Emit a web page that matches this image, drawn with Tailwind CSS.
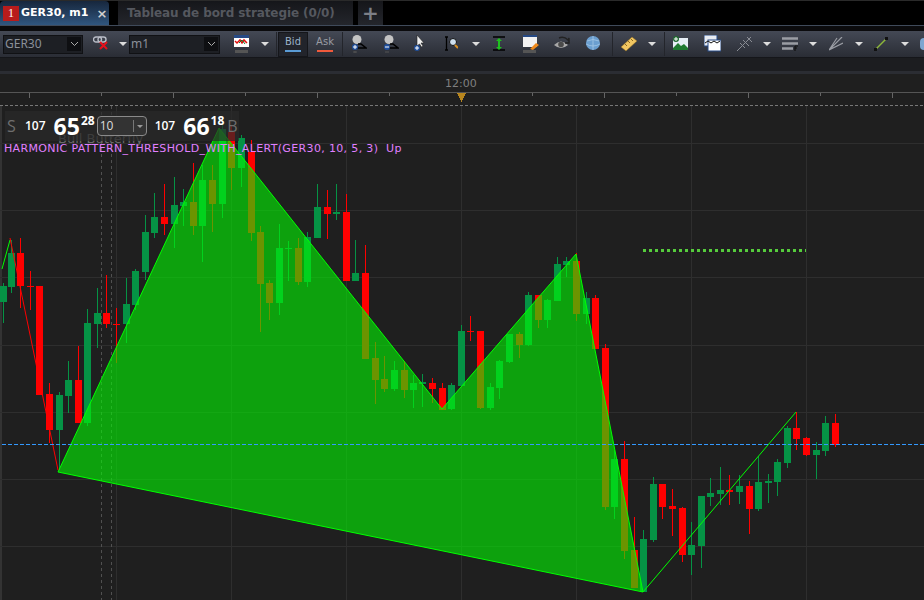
<!DOCTYPE html>
<html lang="en">
<head>
    <meta charset="UTF-8">
    <title>GER30, m1</title>
    <script src="https://cdn.jsdelivr.net/npm/@tailwindcss/browser@4"></script>
</head>
<body class="bg-black overflow-hidden">
<div class="w-[924px] h-[600px] flex flex-col font-['DejaVu_Sans',sans-serif]">

    <!-- tabs -->
    <div class="h-[26px] flex items-end bg-black border-t border-[#2a2a2a] border-b border-b-[#3f4a5a]">
        <div class="w-[109px] h-[24px] flex items-center bg-gradient-to-b from-[#17273d] to-[#30567f] rounded-t-sm whitespace-nowrap">
            <span class="w-[16px] h-[15px] ml-[3px] shrink-0 flex items-center justify-center bg-[#b81c1c] text-white text-[12px] font-['Liberation_Serif',serif]">1</span>
            <span class="ml-[2px] text-white text-[11px] font-bold">GER30, m1</span>
            <span class="ml-[8px] text-[#d0d0d0] text-[13px] font-bold leading-none">×</span>
        </div>
        <div class="w-[235px] h-[24px] ml-[9px] pl-[9px] flex items-center bg-gradient-to-b from-[#15161a] to-[#24262c] text-[#55585f] text-[12px] font-bold tracking-[-0.1px] whitespace-nowrap">Tableau de bord strategie (0/0)</div>
        <div class="w-[25px] h-[24px] ml-[5px] flex items-center justify-center bg-gradient-to-b from-[#15161a] to-[#24262c] text-[#7d8087] text-[20px] font-bold leading-none">+</div>
    </div>

    <div class="h-[5px] bg-[#0b0b0d]"></div>

    <!-- toolbar -->
    <div class="h-[27px] flex items-center pl-[3px] overflow-hidden bg-gradient-to-b from-[#444955] to-[#2a2d35] border-b border-[#15161a]">
        <div class="w-[80px] h-[19px] flex items-center justify-between bg-[#1d1f24] border border-[#101114] text-[#8b909a] text-[12px] pl-[1px] font-['Noto_Sans',sans-serif]">GER30<span class="w-[14px] h-[14px] mr-[1px] bg-[#0e0f12] flex items-center justify-center"><svg width="7" height="4"><path d="M0 0l3.500 3.500L7 0" fill="none" stroke="#aaa"/></svg></span></div>
        <div class="w-[22px] ml-[7px] flex justify-center">
            <svg width="16" height="16" viewBox="0 0 16 16"><rect x="0.500" y="1" width="8" height="5" rx="2.500" fill="none" stroke="#b8bcc6" stroke-width="1.400"/><rect x="5" y="1" width="8" height="5" rx="2.500" fill="none" stroke="#b8bcc6" stroke-width="1.400"/><path d="M7 6l7 7M14 6l-7 7" stroke="#e8101c" stroke-width="2"/></svg>
        </div>
        <svg class="ml-[7px]" width="8" height="4"><path d="M0 0h8L4 4z" fill="#ddd"/></svg>
        <div class="w-[91px] h-[19px] ml-[2px] flex items-center justify-between bg-[#1d1f24] border border-[#101114] text-[#8b909a] text-[12px] pl-[1px] font-['Noto_Sans',sans-serif]">m1<span class="w-[14px] h-[14px] mr-[1px] bg-[#0e0f12] flex items-center justify-center"><svg width="7" height="4"><path d="M0 0l3.500 3.500L7 0" fill="none" stroke="#aaa"/></svg></span></div>
        <div class="w-[16px] ml-[14px] flex justify-center">
            <svg width="16" height="18" viewBox="0 0 16 18"><rect width="15" height="12" fill="#fff"/><rect width="15" height="3" fill="#264a86"/><path d="M1 6l2 2 3-3 2 3 2-3 3 3" fill="none" stroke="#e01010" stroke-width="1.500"/><path d="M5 8l3-3 3 4" fill="none" stroke="#108030"/><rect x="1" y="15" width="13" height="3" fill="#555"/></svg>
        </div>
        <svg class="ml-[11px]" width="8" height="4"><path d="M0 0h8L4 4z" fill="#ddd"/></svg>
        <div class="w-[1px] h-[24px] ml-[7px] bg-[#23252b]"></div>
        <div class="w-[30px] h-[25px] ml-[1px] flex flex-col items-center justify-center bg-[#22242b] border border-[#15161a] text-[#9bb2c8] text-[10px] leading-none">Bid<span class="w-[16px] h-[2px] mt-[3px] bg-[#5a9bd5]"></span></div>
        <div class="w-[34px] h-[25px] flex flex-col items-center justify-center text-[#9a9ca3] text-[10px] leading-none">Ask<span class="w-[16px] h-[2px] mt-[3px] bg-[#f05a3c]"></span></div>
        <div class="w-[1px] h-[24px] bg-[#23252b]"></div>

        <!-- zoom / selection icons -->
        <svg class="ml-[8px]" width="16" height="18" viewBox="0 0 16 18"><circle cx="6" cy="4.500" r="4.500" fill="#c4c4c4"/><path d="M7 9h3l5 4H6" fill="none" stroke="#000" stroke-width="1.500"/><circle cx="4" cy="12" r="3" fill="#1f4f9c"/><path d="M2 12h4M4 10v4" stroke="#fff"/><path d="M2 17h4M4 16v2" stroke="#555"/></svg>
        <svg class="ml-[16px]" width="16" height="18" viewBox="0 0 16 18"><circle cx="6" cy="4.500" r="4.500" fill="#c4c4c4"/><path d="M7 9h3l5 4H6" fill="none" stroke="#000" stroke-width="1.500"/><circle cx="4" cy="12" r="3" fill="#1f4f9c"/><path d="M2 12h4" stroke="#fff"/><path d="M2 17h4" stroke="#555"/></svg>
        <svg class="ml-[15px]" width="12" height="18" viewBox="0 0 12 18"><path d="M3 0v11l2.500-2 2 3 1.500-1-2-3h3z" fill="#eee" stroke="#222" stroke-width=".6"/><circle cx="3" cy="13" r="3" fill="#1f4f9c"/><path d="M1 13h4M3 11v4" stroke="#fff"/></svg>
        <svg class="ml-[18px]" width="14" height="18" viewBox="0 0 14 18"><path d="M1 2h3M1 15h3M2.500 2v13" stroke="#000" stroke-width="1.300"/><circle cx="9" cy="7" r="3.500" fill="#cfe0ee" stroke="#111"/><path d="M11 10l3 3" stroke="#d89020" stroke-width="2"/></svg>
        <svg class="ml-[14px]" width="8" height="4"><path d="M0 0h8L4 4z" fill="#ddd"/></svg>
        <svg class="ml-[13px]" width="12" height="16" viewBox="0 0 12 16"><path d="M0 1h12M0 14h12" stroke="#000" stroke-width="1.500"/><path d="M6 2l3 3H7v6h2l-3 3-3-3h2V5H3z" fill="#1fc01f"/></svg>
        <svg class="ml-[18px]" width="16" height="18" viewBox="0 0 16 18"><rect width="14" height="12" fill="#f2f2f2"/><rect width="14" height="2" fill="#264a86"/><path d="M7 14l6-6 3 2-6 5z" fill="#f08a1c"/><rect y="15" width="13" height="3" fill="#555"/></svg>
        <svg class="ml-[15px]" width="16" height="16" viewBox="0 0 16 16"><path d="M0 9q7-7 14 0-7 6-14 0z" fill="#a8a8a8"/><circle cx="7" cy="8.500" r="2.800" fill="#4a4a4a"/><path d="M5 2q5-2 9 2l1-2v5h-4" fill="none" stroke="#222" stroke-width="1.400"/></svg>
        <svg class="ml-[15px]" width="16" height="17" viewBox="0 0 16 17"><circle cx="8" cy="7" r="7" fill="#6b9fd0"/><path d="M2 5q6-3 12 0M1 8q7 4 14 0M8 0v14" fill="none" stroke="#a5c8e6" stroke-width=".8"/></svg>
        <div class="w-[1px] h-[24px] ml-[11px] bg-[#23252b]"></div>
        <svg class="ml-[8px]" width="16" height="16" viewBox="0 0 16 16"><path d="M0 11L11 1l5 4L5 15z" fill="#f2c762" stroke="#8c6a20" stroke-width=".5"/><path d="M4 8l2 2M7 5l2 2M10 3l2 2" stroke="#8c6a20"/></svg>
        <svg class="ml-[11px]" width="8" height="4"><path d="M0 0h8L4 4z" fill="#ddd"/></svg>
        <div class="w-[1px] h-[24px] ml-[8px] bg-[#23252b]"></div>
        <svg class="ml-[8px]" width="16" height="16" viewBox="0 0 16 16"><rect y="2" width="15" height="12" fill="#e6eef5"/><path d="M0 12l5-5 3 3 3-2 4 4v2H0z" fill="#1f7a30"/><circle cx="3" cy="3" r="3" fill="#1f6a30"/><path d="M1 3h4M3 1v4" stroke="#fff"/></svg>
        <svg class="ml-[15px]" width="17" height="18" viewBox="0 0 17 18"><rect width="13" height="11" fill="#e8ecf2" stroke="#264a86"/><rect x="4" y="5" width="13" height="11" fill="#fff" stroke="#264a86"/><path d="M1 8l3-2 3 2 3-2 3 2 3-2" fill="none" stroke="#111"/></svg>
        <svg class="ml-[16px]" width="15" height="16" viewBox="0 0 15 16"><path d="M0 15L14 1M3 7l5 5M6 4l6 6M10 1l5 5" stroke="#8a8d94" fill="none"/></svg>
        <svg class="ml-[11px]" width="8" height="4"><path d="M0 0h8L4 4z" fill="#ddd"/></svg>
        <svg class="ml-[11px]" width="16" height="14" viewBox="0 0 16 14"><path d="M0 1.500h16M0 6.500h16M0 11.500h11" stroke="#9a9da4" stroke-width="2.500"/><path d="M13 9h3M13 9v5M13 11h2" stroke="#111" stroke-width="1.200" fill="none"/></svg>
        <svg class="ml-[11px]" width="8" height="4"><path d="M0 0h8L4 4z" fill="#ddd"/></svg>
        <svg class="ml-[12px]" width="14" height="14" viewBox="0 0 14 14"><path d="M0 13L13 0M0 13L8 1M0 13L14 6" stroke="#9a9da4" stroke-width="1.200" fill="none"/></svg>
        <svg class="ml-[12px]" width="8" height="4"><path d="M0 0h8L4 4z" fill="#ddd"/></svg>
        <svg class="ml-[11px]" width="14" height="14" viewBox="0 0 14 14"><path d="M1 13L13 1" stroke="#8db83a" stroke-width="1.500"/><rect y="11" width="3" height="3" fill="#111"/><rect x="11" width="3" height="3" fill="#111"/></svg>
        <svg class="ml-[13px]" width="8" height="4"><path d="M0 0h8L4 4z" fill="#ddd"/></svg>
        <div class="w-[4px] h-[12px] ml-[11px] bg-[#7da6d0] rounded-l-sm"></div>
    </div>

    <div class="h-[13px] bg-[#1c1d20]"></div>
    <div class="h-[3px] bg-[#2b2d33]"></div>

    <!-- time axis -->
    <div class="relative h-[32px] bg-[#1f1f1f]">
        <span class="absolute left-[445px] top-[2px] text-[#7f7f7f] text-[11px]">12:00</span>
        <svg class="absolute left-0 top-0" width="924" height="32" viewBox="0 74 924 32" shape-rendering="crispEdges">
            <path d="M0 92.500h924" stroke="#555"/>
            <path d="M29.500 93v5M173.500 93v5M317.500 93v5M604.500 93v5M748.500 93v5M892.500 93v5" stroke="#666"/>
            <path d="M101.500 93v3M245.500 93v3M389.500 93v3M532.500 93v3M676.500 93v3M820.500 93v3" stroke="#666"/>
            <path d="M457 93h9l-4.500 9z" fill="#b8861e"/>
            <path d="M0 105.500h924" stroke="#777" stroke-dasharray="3 2"/>
        </svg>
    </div>

    <!-- chart -->
    <div class="relative flex-1 bg-[#1f1f1f] border-l-2 border-[#333]">
        <svg id="chart" class="absolute left-[-2px] top-0" width="924" height="494" viewBox="0 106 924 494"></svg>

        <span class="absolute left-[56px] top-[23px] text-[#6a6a6a] text-[13px] whitespace-nowrap">Bull Butterfly</span>
        <div class="absolute left-[3px] top-[5px] w-[234px] h-[30px] flex items-center bg-[#2a2a2a]/70 font-['Open_Sans',sans-serif] text-white">
            <span class="ml-[2px] w-[18px] text-[#6e6e6e] text-[16px]">S</span>
            <span class="text-[12px] font-semibold">107</span>
            <span class="ml-[8px] text-[23px] font-bold leading-none">65</span>
            <span class="ml-[1px] mb-[11px] text-[12px] font-bold leading-none">28</span>
            <span class="w-[50px] h-[20px] ml-[2px] flex items-center justify-between border border-[#8a8a8a] rounded-sm bg-[#333] text-[#ddd] text-[12px] pl-[2px]">10<span class="w-[13px] flex justify-center border-l border-[#777]"><svg width="6" height="12"><path d="M0 5h6L3 8z" fill="#999"/></svg></span></span>
            <span class="ml-[8px] text-[12px] font-semibold">107</span>
            <span class="ml-[8px] text-[23px] font-bold leading-none">66</span>
            <span class="ml-[1px] mb-[11px] text-[12px] font-bold leading-none">18</span>
            <span class="ml-[3px] text-[#6e6e6e] text-[16px]">B</span>
        </div>
        <span class="absolute left-[2px] top-[36px] text-[#e080ff] text-[11px] tracking-[0.35px] leading-[13px] whitespace-pre">HARMONIC PATTERN_THRESHOLD_WITH_ALERT(GER30, 10, 5, 3)  Up</span>
    </div>
</div>

<script>
    // x, wick top, wick bottom, body top, body bottom, 1 = up (green) / 0 = down (red)
    const candles = [
        [3,283,323,286,302,1],[11,240,293,253,287,1],[20,238,308,253,286,0],[30,271,310,286,287,0],
        [39,286,395,286,395,0],[49,383,443,394,430,0],[59,392,470,395,430,1],[68,361,413,380,396,1],
        [78,346,423,380,423,0],[87,309,426,323,423,1],[97,288,348,313,324,1],[106,275,328,313,324,0],
        [116,308,363,324,325,0],[126,278,343,304,324,1],[135,269,310,271,305,1],[145,215,280,232,272,1],
        [154,193,238,217,233,1],[164,184,235,217,224,0],[174,177,248,205,224,1],[183,189,226,202,206,1],
        [193,163,235,202,226,0],[202,165,262,180,226,1],[212,165,232,180,204,0],[222,125,218,129,204,1],
        [231,125,190,132,168,0],[241,135,187,138,168,1],[251,140,241,152,233,0],[260,226,332,232,284,0],
        [269,280,320,283,303,0],[279,224,315,248,303,1],[288,241,281,248,249,1],[298,238,285,248,282,0],
        [307,232,287,237,282,1],[317,184,238,207,238,1],[327,190,239,207,214,0],[336,184,220,212,214,1],
        [346,194,281,212,281,0],[355,240,281,273,281,1],[365,245,359,273,359,0],[375,342,404,358,380,0],
        [384,356,392,379,389,0],[394,361,391,370,389,1],[404,361,398,370,390,0],[413,375,408,383,390,1],
        [422,374,407,382,384,1],[432,378,403,383,389,0],[442,383,410,388,410,0],[451,383,410,385,409,1],
        [461,325,386,331,386,1],[470,316,341,331,332,0],[480,331,409,331,408,0],[490,383,410,387,408,1],
        [499,360,399,361,388,1],[509,334,363,334,362,1],[519,332,358,334,345,0],[528,292,346,295,345,1],
        [538,295,328,295,320,0],[547,299,328,300,320,1],[557,257,301,264,301,1],[566,257,277,261,265,1],
        [576,253,321,261,314,0],[586,292,324,298,314,1],[595,295,349,298,349,0],[605,344,510,348,507,0],
        [614,450,519,459,507,1],[624,441,559,459,551,0],[634,517,588,550,588,0],[643,530,592,539,592,1],
        [653,477,542,484,540,1],[662,484,519,484,507,0],[672,489,536,506,509,0],[682,507,562,508,555,0],
        [691,522,575,545,555,1],[701,496,568,496,546,1],[710,478,506,493,497,1],[720,467,505,490,494,1],
        [729,475,505,490,492,0],[739,475,504,486,492,1],[749,481,534,486,509,0],[758,456,511,482,509,1],
        [768,474,503,481,483,1],[777,459,496,462,482,1],[787,426,468,428,463,1],[796,412,450,428,439,0],
        [806,437,456,438,455,0],[816,442,479,450,455,1],[825,416,456,423,451,1],[835,414,447,423,445,0]
    ];

    const NS = "http://www.w3.org/2000/svg";
    const chart = document.getElementById("chart");
    function add(tag, attrs) {
        const el = document.createElementNS(NS, tag);
        for (const k in attrs) el.setAttribute(k, attrs[k]);
        chart.appendChild(el);
    }

    // grid
    [143, 210, 277, 345, 412, 479, 546].forEach(y => add("path", { d: `M0 ${y + .5}H924`, stroke: "#2e2e2e", "shape-rendering": "crispEdges" }));
    [116, 231, 346, 461, 576, 691, 806].forEach(x => add("path", { d: `M${x + .5} 106V600`, stroke: "#2e2e2e", "shape-rendering": "crispEdges" }));
    [101, 111].forEach(x => add("path", { d: `M${x + .5} 106V600`, stroke: "#505050", "stroke-dasharray": "3 3", "shape-rendering": "crispEdges" }));

    candles.forEach(([x, wt, wb, bt, bb, up]) => {
        const color = up ? "#059345" : "#ff0000";
        add("rect", { x, y: wt, width: 1, height: wb - wt, fill: color, "shape-rendering": "crispEdges" });
        add("rect", { x: x - 3, y: bt, width: 7, height: bb - bt, fill: color, "shape-rendering": "crispEdges" });
    });

    // butterfly pattern
    const pattern = "58,472 219,128 442,409 576,254 643,592";
    add("polygon", { points: pattern, fill: "#00ff00", "fill-opacity": .58, stroke: "#00ff00", "stroke-linejoin": "bevel" });
    add("path", { d: "M2 269L10 240", stroke: "#00ff00", fill: "none" });
    add("path", { d: "M10 238L58 470", stroke: "#ff0000", fill: "none" });
    add("path", { d: "M643 592L796 412", stroke: "#00ff00", fill: "none" });
    add("path", { d: "M643 250.500H806", stroke: "#55cc3c", "stroke-width": 3, "stroke-dasharray": "3 3", "shape-rendering": "crispEdges" });
    add("path", { d: "M2 444.500H924", stroke: "#3399ff", "stroke-dasharray": "4 2", "shape-rendering": "crispEdges" });
</script>
</body>
</html>
